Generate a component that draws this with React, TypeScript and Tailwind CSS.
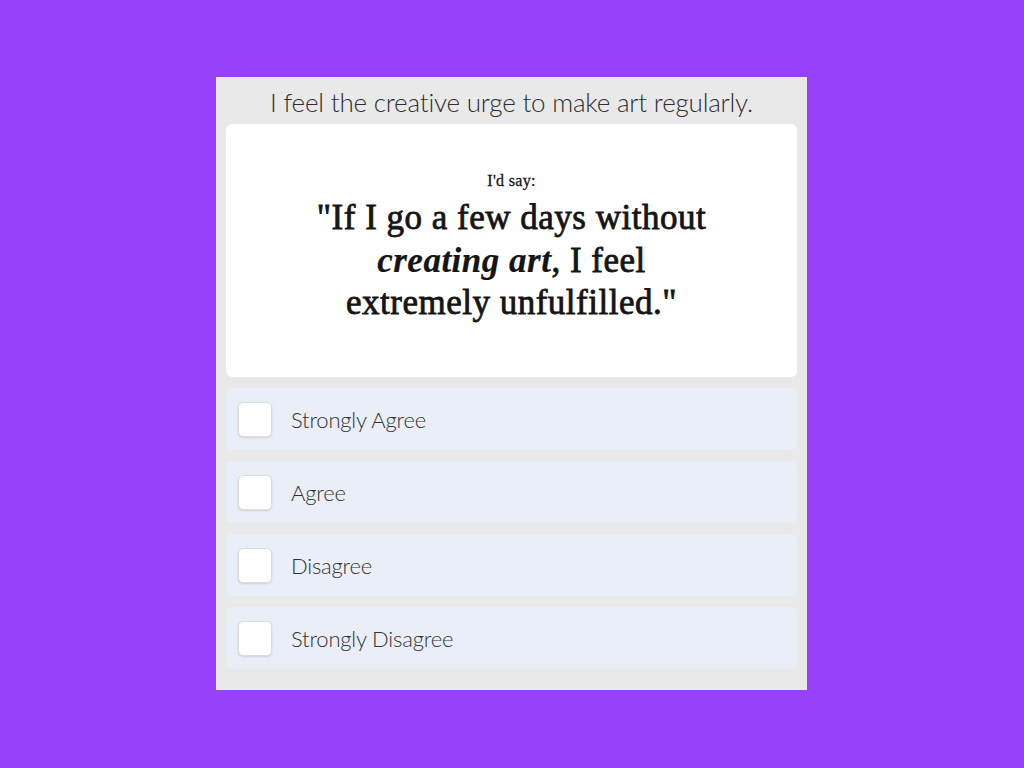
import React from 'react';

const opciones = ['Strongly Agree', 'Agree', 'Disagree', 'Strongly Disagree'];

export default function App() {
  return (
    <div className="min-h-screen w-full bg-[#9841fc] flex justify-center pt-[77px]">
      <div className="w-[591px] h-[613px] mr-[1px] bg-[#e9e9e9] px-[10px] flex flex-col">
        {/* Pregunta */}
        <div className="h-[47px] flex items-center justify-center pt-[4px] text-[26px] font-light text-[#2e2e2e] font-['Lato',sans-serif] tracking-[-0.2px]">
          I feel the creative urge to make art regularly.
        </div>

        {/* Tarjeta con la cita */}
        <div className="h-[253px] bg-white rounded-[6px] flex flex-col items-center pt-[48px] font-['Liberation_Serif',serif] text-[#151515]">
          <p className="text-[16px] leading-[18px] tracking-[0.3px] [-webkit-text-stroke:0.3px_#151515]">I'd say:</p>
          <p className="mt-[7px] text-[35px] leading-[42.5px] text-center whitespace-nowrap tracking-[0.5px] [-webkit-text-stroke:0.8px_#151515]">
            "If I go a few days without
            <br />
            <em className="italic font-bold [-webkit-text-stroke:0.2px_#151515]">creating art</em>, I feel
            <br />
            extremely unfulfilled."
          </p>
        </div>

        {/* Opciones */}
        <div className="mt-[11px] flex flex-col gap-[11px]">
          {opciones.map(opcion => (
            <label
              key={opcion}
              className="h-[62px] bg-[#e9eef7] rounded-[6px] flex items-center pl-[12px] cursor-pointer"
            >
              <span className="w-[34px] h-[35px] bg-white rounded-[5px] border border-[#dcdcdc] shadow-[0_1px_2px_rgba(0,0,0,0.12)]"></span>
              <span className="ml-[19px] text-[22px] font-light text-[#333] font-['Lato',sans-serif] tracking-[-0.2px]">
                {opcion}
              </span>
            </label>
          ))}
        </div>
      </div>
    </div>
  );
}
